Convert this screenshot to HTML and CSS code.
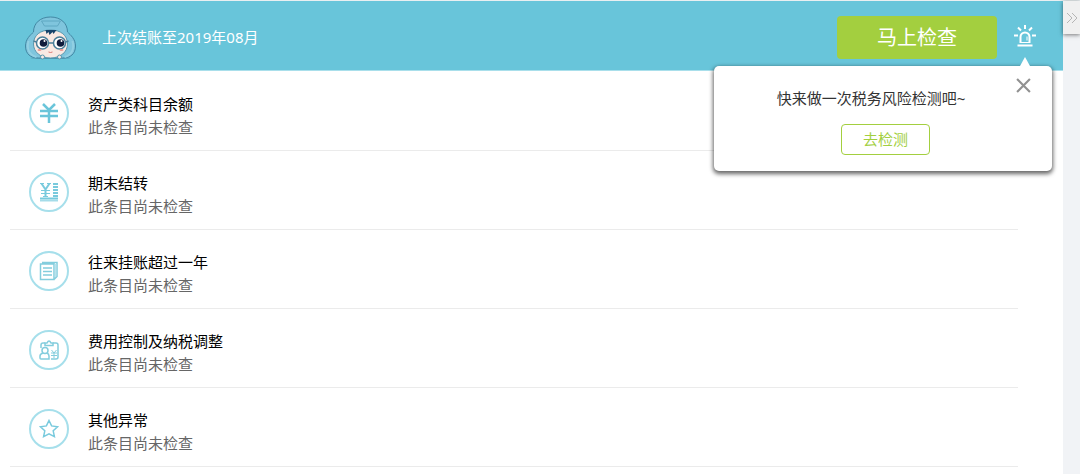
FILE: index.html
```html
<!DOCTYPE html>
<html lang="zh-CN">
<head>
  <meta charset="UTF-8">
  <meta name="viewport" content="width=device-width, initial-scale=1.0">
  <title>结账检查</title>
  <link rel="stylesheet" href="styles.css">
</head>
<body>
  <div class="page">
    <main class="main">
      <header class="header">
        <svg class="avatar" viewBox="0 0 52 44" aria-hidden="true">
          <ellipse cx="26" cy="42" rx="20" ry="1" fill="#559fb7"/>
          <path d="M26 1C36 1 43 7 43 16c3 3 8 7 8 14 0 8-5 12-13 12H14C6 42 1 38 1 30c0-7 5-11 8-14C9 7 16 1 26 1z" fill="#7fc5dd" stroke="#4287a3" stroke-width="1"/>
          <path d="M4 25c-2 8 1 14 8 16M48 25c2 8-1 14-8 16" fill="none" stroke="#93d0e3" stroke-width="2"/>
          <path d="M17 5l3 5h13l3-5z" fill="none" stroke="#5fa8c2" stroke-width="1"/>
          <path d="M26 14c10 0 17 5 17 14 0 8-7 14-17 14S9 36 9 28c0-9 7-14 17-14z" fill="#f9e9e3" stroke="#5897ae" stroke-width="1"/>
          <path d="M21 14h11l-3 4-1-2-3 3-1-3-2 2z" fill="#17446b"/>
          <circle cx="18" cy="27" r="6" fill="#fff" stroke="#487e99" stroke-width="1.500"/>
          <circle cx="35" cy="27" r="6" fill="#fff" stroke="#487e99" stroke-width="1.500"/>
          <path d="M24 27h5M9 25l3 1M44 25l-3 1" stroke="#487e99" stroke-width="1.500"/>
          <circle cx="19" cy="27" r="3.800" fill="#101c3c"/>
          <circle cx="36" cy="27" r="3.800" fill="#101c3c"/>
          <circle cx="20" cy="25" r="1" fill="#fff"/>
          <circle cx="37" cy="25" r="1" fill="#fff"/>
          <ellipse cx="15" cy="34" rx="2" ry="1" fill="#ef9892"/>
          <ellipse cx="37" cy="34" rx="2" ry="1" fill="#ef9892"/>
          <path d="M24 36q2 1 4 0" fill="none" stroke="#dc7772" stroke-width="1"/>
          <circle cx="18" cy="41" r="2" fill="#f9e9e3" stroke="#5897ae" stroke-width="1"/>
          <circle cx="35" cy="41" r="2" fill="#f9e9e3" stroke="#5897ae" stroke-width="1"/>
        </svg>
        <p class="last-close">上次结账至2019年08月</p>
        <button type="button" class="check-btn">马上检查</button>
        <div class="alarm">
          <button type="button" class="alarm-btn" aria-label="税务风险提醒">
            <svg viewBox="0 0 22 22" fill="none" stroke="#fff" stroke-width="2">
              <path d="M6.500 18v-6a4.500 4.500 0 0 1 9 0v6"/>
              <path d="M3.500 20.500h15M11 0v4M4 2.500l3 3M18 2.500l-3 3M0 10.500h4M18 10.500h4"/>
              <path d="M6 17.500h10" stroke-width="1"/>
              <path d="M13 11.500v4" stroke-width="1"/>
            </svg>
          </button>
          <div class="popup">
            <button type="button" class="popup-close" aria-label="关闭">
              <svg viewBox="0 0 14 14" fill="none" stroke="#919191" stroke-width="2"><path d="M1 1l12 12M13 1L1 13"/></svg>
            </button>
            <p class="popup-text">快来做一次税务风险检测吧~</p>
            <button type="button" class="detect-btn">去检测</button>
          </div>
        </div>
      </header>

      <ul class="check-list">
        <li class="check-item">
          <span class="item-icon">
            <svg viewBox="0 0 20 20" fill="none" stroke="#6ac5da">
              <path d="M4 1l6 6 6-6" stroke-width="2.500"/>
              <path d="M1 8h18M1 13h18M10 7v13" stroke-width="2.500"/>
            </svg>
          </span>
          <div class="item-text">
            <h2>资产类科目余额</h2>
            <p>此条目尚未检查</p>
          </div>
        </li>
        <li class="check-item">
          <span class="item-icon">
            <svg viewBox="0 0 20 20" fill="none" stroke="#79cadd">
              <path d="M2.500 1.500l4 6 4-6M6.500 7v8" stroke-width="2"/>
              <path d="M1 1.500h4M8 1.500h4M2 8.500h9M2 11.500h9M4 14.500h5" stroke-width="1"/>
              <path d="M14 2h5M14 5h5M14 8h5M14 11h5M14 14h5" stroke-width="2"/>
              <path d="M1 16.500h18" stroke-width="2"/>
              <path d="M1 18.500h18" stroke="#a5dce9" stroke-width="2"/>
            </svg>
          </span>
          <div class="item-text">
            <h2>期末结转</h2>
            <p>此条目尚未检查</p>
          </div>
        </li>
        <li class="check-item">
          <span class="item-icon">
            <svg viewBox="0 0 20 20" fill="none" stroke="#83cddd" stroke-width="1.500">
              <path d="M1.500 3h13.500v15.500H1.500zM3 1.500h15v14l-3 3"/>
              <path d="M16.500 3v13" stroke="#b8e3ed"/>
              <path d="M4 7h9M4 10.500h9M4 14h9"/>
            </svg>
          </span>
          <div class="item-text">
            <h2>往来挂账超过一年</h2>
            <p>此条目尚未检查</p>
          </div>
        </li>
        <li class="check-item">
          <span class="item-icon">
            <svg viewBox="0 0 20 20" fill="none" stroke="#83cddd" stroke-width="1.500">
              <path d="M2 8V5q0-2 2-2h2M14 3h3q2 0 2 2v5"/>
              <path d="M6 5.500V3h2q2-4 4 0h2v2.500z"/>
              <circle cx="6" cy="10.500" r="3"/>
              <path d="M4 13q-3 1-3 3v2q0 1 1 1h8v-3q0-2-2-3"/>
              <path d="M12 19h5q2 0 2-2v-7"/>
              <path d="M12.500 10l2.500 3 2.500-3M12 13h6M12 15.500h6M15 13v5" stroke-width="1"/>
            </svg>
          </span>
          <div class="item-text">
            <h2>费用控制及纳税调整</h2>
            <p>此条目尚未检查</p>
          </div>
        </li>
        <li class="check-item">
          <span class="item-icon">
            <svg viewBox="0 0 20 20" fill="none" stroke="#79cadd" stroke-width="1.500">
              <path d="M10 1.500l2.600 5.400 6 .8-4.400 4.100 1.200 5.900-5.400-2.800-5.400 2.800 1.200-5.900-4.400-4.100 6-.8z"/>
            </svg>
          </span>
          <div class="item-text">
            <h2>其他异常</h2>
            <p>此条目尚未检查</p>
          </div>
        </li>
      </ul>
    </main>

    <aside class="side">
      <button type="button" class="side-toggle" aria-label="收起">
        <svg viewBox="0 0 12 12" fill="none" stroke="#b5b5b5" stroke-width="1"><path d="M1 1l5 5-5 5M6 1l5 5-5 5"/></svg>
      </button>
    </aside>
  </div>
</body>
</html>
```
FILE: styles.css
```css
* {
  box-sizing: border-box;
}

body {
  margin: 0;
  background: #fff;
  color: #000;
  font-family: "Noto Sans", "Noto Sans CJK SC", sans-serif;
  font-size: 15px;
  line-height: 23px;
}

h2,
p,
ul {
  margin: 0;
  padding: 0;
  font-size: inherit;
  font-weight: normal;
}

button {
  padding: 0;
  border: 0;
  background: none;
  font: inherit;
  cursor: pointer;
}

svg {
  display: block;
}

.page {
  display: flex;
  min-height: 100vh;
  border-top: 1px solid #e9eff1;
}

.main {
  flex: 1;
}

/* header bar */
.header {
  display: flex;
  align-items: center;
  height: 70px;
  padding: 0 27px 0 24px;
  border-bottom: 1px solid #a9dfeb;
  background: #68c5da;
}

.avatar {
  width: 53px;
  height: 44px;
  margin-top: 4px;
}

.last-close {
  margin-left: 25px;
  margin-top: 4px;
  color: #fff;
}

.check-btn {
  width: 160px;
  height: 43px;
  margin-left: auto;
  margin-top: 4px;
  border-radius: 4px;
  background: #a3cf3f;
  color: #fff;
  font-size: 20px;
}

.alarm {
  position: relative;
  margin-left: 17px;
}

.alarm-btn {
  display: block;
  width: 22px;
  height: 22px;
}

/* popup under the alarm icon */
.popup {
  position: absolute;
  top: 41px;
  right: -16px;
  z-index: 10;
  display: flex;
  flex-direction: column;
  align-items: center;
  gap: 14px;
  width: 338px;
  padding: 21px 0 16px;
  border-radius: 5px;
  background: #fff;
  box-shadow: 0 2px 4px 1px rgba(0, 0, 0, 0.6);
}

.popup::before {
  content: "";
  position: absolute;
  top: -9px;
  right: 22px;
  border: 5px solid transparent;
  border-top: 0;
  border-bottom: 9px solid #fff;
}

.popup-close {
  position: absolute;
  top: 12px;
  right: 21px;
  width: 15px;
  height: 15px;
}

.popup-text {
  padding-right: 24px;
  color: #333;
}

.detect-btn {
  width: 89px;
  height: 31px;
  margin-left: 5px;
  border: 1px solid #a3cf3f;
  border-radius: 4px;
  color: #a3cf3f;
}

/* list */
.check-list {
  margin: 0 45px 0 10px;
  padding-top: 1px;
  list-style: none;
}

.check-item {
  display: flex;
  gap: 19px;
  padding: 21px 0 11px 19px;
  border-bottom: 1px solid #ebebeb;
}

.item-icon {
  display: flex;
  align-items: center;
  justify-content: center;
  width: 40px;
  height: 40px;
  border: 2px solid #a6dfeb;
  border-radius: 50%;
}

.item-icon svg {
  width: 20px;
  height: 20px;
}

.item-text p {
  color: #666;
}

/* right strip */
.side {
  width: 17px;
  background: #f1f3f6;
}

.side-toggle {
  display: flex;
  align-items: center;
  justify-content: center;
  width: 100%;
  height: 33px;
  background: #f0f0f0;
  box-shadow: 0 1px 4px rgba(0, 0, 0, 0.5);
}

.side-toggle svg {
  width: 12px;
  height: 12px;
}
```
